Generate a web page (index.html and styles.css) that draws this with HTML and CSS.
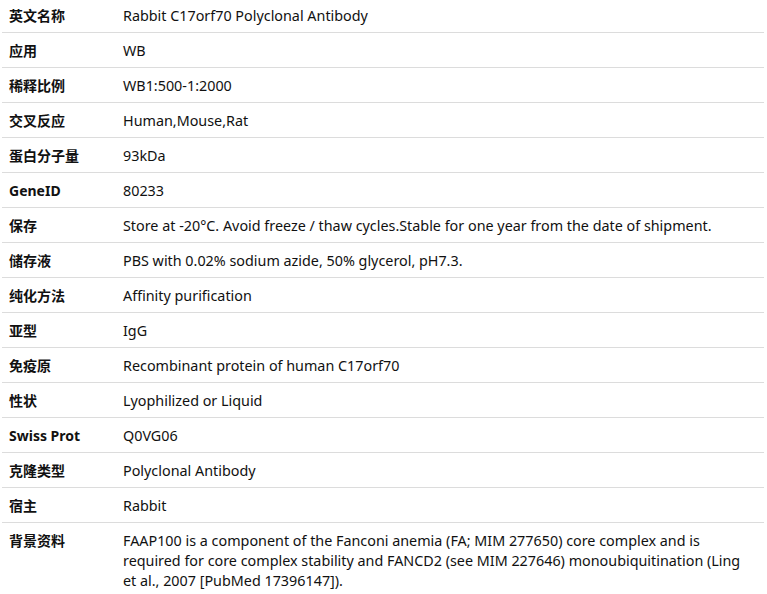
FILE: index.html
```html
<!DOCTYPE html>
<html lang="zh">
<head>
<meta charset="utf-8">
<link rel="stylesheet" href="styles.css">
</head>
<body>
<div class="spec">
  <div class="row"><div class="key">英文名称</div><div class="val">Rabbit C17orf70 Polyclonal Antibody</div></div>
  <div class="row"><div class="key">应用</div><div class="val">WB</div></div>
  <div class="row"><div class="key">稀释比例</div><div class="val">WB1:500-1:2000</div></div>
  <div class="row"><div class="key">交叉反应</div><div class="val">Human,Mouse,Rat</div></div>
  <div class="row"><div class="key">蛋白分子量</div><div class="val">93kDa</div></div>
  <div class="row"><div class="key">GeneID</div><div class="val">80233</div></div>
  <div class="row"><div class="key">保存</div><div class="val">Store at -20°C. Avoid freeze / thaw cycles.Stable for one year from the date of shipment.</div></div>
  <div class="row"><div class="key">储存液</div><div class="val">PBS with 0.02% sodium azide, 50% glycerol, pH7.3.</div></div>
  <div class="row"><div class="key">纯化方法</div><div class="val">Affinity purification</div></div>
  <div class="row"><div class="key">亚型</div><div class="val">IgG</div></div>
  <div class="row"><div class="key">免疫原</div><div class="val">Recombinant protein of human C17orf70</div></div>
  <div class="row"><div class="key">性状</div><div class="val">Lyophilized or Liquid</div></div>
  <div class="row"><div class="key">Swiss Prot</div><div class="val">Q0VG06</div></div>
  <div class="row"><div class="key">克隆类型</div><div class="val">Polyclonal Antibody</div></div>
  <div class="row"><div class="key">宿主</div><div class="val">Rabbit</div></div>
  <div class="row last"><div class="key">背景资料</div><div class="val">FAAP100 is a component of the Fanconi anemia (FA; MIM 277650) core complex and is required for core complex stability and FANCD2 (see MIM 227646) monoubiquitination (Ling et al., 2007 [PubMed 17396147]).</div></div>
</div>
</body>
</html>
```

FILE: styles.css
```css
html, body {
  margin: 0;
  padding: 0;
  background: #fff;
}
body {
  font-family: "Noto Sans", "Noto Sans CJK SC", sans-serif;
  font-size: 14.35px;
  line-height: 20px;
  color: #111;
}
.spec {
  margin: -2px 3px 0 2px;
  display: flex;
  flex-direction: column;
}
.row {
  display: grid;
  grid-template-columns: 114px 1fr;
  border-bottom: 1px solid #dcdcdc;
}
.row.last {
  border-bottom: none;
}
.key {
  padding: 8px 0 6px 7px;
  font-weight: bold;
  font-size: 14px;
}
.val {
  padding: 8px 8px 6px 7px;
}
```
